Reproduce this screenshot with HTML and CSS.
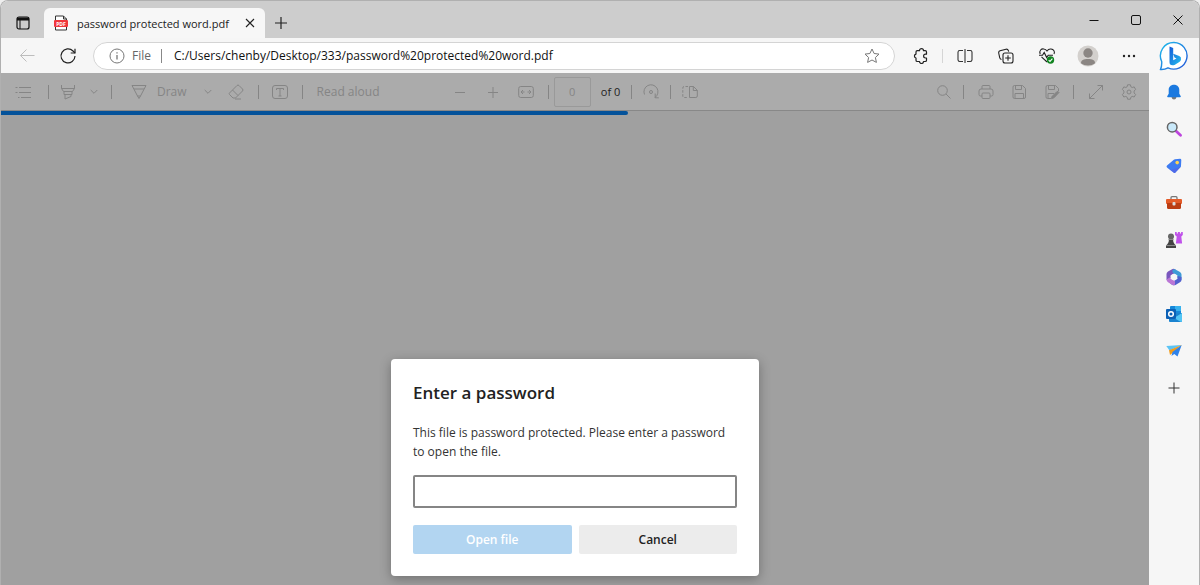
FILE: index.html
```html
<!DOCTYPE html>
<html lang="en">
<head>
    <meta charset="UTF-8">
    <meta name="viewport" content="width=device-width, initial-scale=1.0">
    <title>password protected word.pdf</title>
    <link rel="stylesheet" href="styles.css">
</head>
<body>
<div class="window">
    <!-- Tabs -->
    <header class="titlebar">
        <button class="tab-menu" aria-label="Tab actions">
            <svg width="16" height="16" viewBox="0 0 16 16" fill="none" stroke="#111"><rect x="2" y="2" width="12" height="12" rx="2" stroke-width="1.2"/><path d="M2 4h12" stroke-width="3"/><path d="M5 5v9" stroke-width="1"/></svg>
        </button>
        <div class="tab">
            <svg width="16" height="16" viewBox="0 0 16 16"><path d="M2.500 1h8l3 3v11h-11z" fill="#fff" stroke="#333"/><path d="M10.500 1v3h3" fill="none" stroke="#333"/><rect x="1" y="5" width="14" height="7" rx="1" fill="#f0383c"/><text x="8" y="10.500" class="pdf-label">PDF</text></svg>
            <span class="tab-title">password protected word.pdf</span>
            <button class="tab-close" aria-label="Close tab">
                <svg width="10" height="10" viewBox="0 0 10 10" stroke="#222" stroke-width="1.1"><path d="M1 1l8 8M9 1l-8 8"/></svg>
            </button>
        </div>
        <button class="new-tab" aria-label="New tab">
            <svg width="14" height="14" viewBox="0 0 14 14" stroke="#222" stroke-width="1.2"><path d="M7 1v12M1 7h12"/></svg>
        </button>
        <div class="window-controls">
            <button aria-label="Minimize"><svg width="10" height="10" viewBox="0 0 10 10" stroke="#111"><path d="M.5 5.500h9"/></svg></button>
            <button aria-label="Maximize"><svg width="10" height="10" viewBox="0 0 10 10" fill="none" stroke="#111"><rect x=".5" y=".5" width="9" height="9" rx="1.500"/></svg></button>
            <button aria-label="Close"><svg width="10" height="10" viewBox="0 0 10 10" stroke="#111"><path d="M.5.5l9 9M9.500.5l-9 9"/></svg></button>
        </div>
    </header>

    <div class="content">
        <main class="page">
            <!-- Address bar -->
            <nav class="navbar">
                <button class="nav-btn" aria-label="Back" disabled><svg width="16" height="16" viewBox="0 0 16 16" fill="none" stroke="#bdbdbd"><path d="M15.500 7.500H1.500M7.500 1.500l-6 6 6 6"/></svg></button>
                <button class="nav-btn" aria-label="Refresh"><svg width="18" height="18" viewBox="0 0 18 18" fill="none" stroke="#222" stroke-width="1.2"><path d="M16 9a7 7 0 1 1-2-5l2 2"/><path d="M16 1.800V6h-4.300"/></svg></button>
                <div class="address">
                    <svg width="16" height="16" viewBox="0 0 16 16" fill="none" stroke="#777"><circle cx="8" cy="8" r="7"/><path d="M8 7v4.500M8 4.300v1.300" stroke-width="1.3"/></svg>
                    <label class="address-kind" for="url">File</label>
                    <input id="url" class="address-url" type="text" value="C:/Users/chenby/Desktop/333/password%20protected%20word.pdf">
                    <button class="favorite" aria-label="Add to favorites"><svg width="16" height="16" viewBox="0 0 16 16" fill="none" stroke="#777" stroke-linejoin="round"><path d="M8 1l2.100 4.500 4.900.6-3.600 3.400 1 4.900L8 12l-4.400 2.400 1-4.900L1 6.100l4.900-.6z"/></svg></button>
                </div>
                <button class="nav-btn" aria-label="Extensions"><svg width="16" height="16" viewBox="0 0 16 16" fill="none" stroke="#222" stroke-width="1.2" stroke-linejoin="round"><path d="M4.300 2.700h2.200a2 2 0 0 1 4 0h1.700q1.300 0 1.300 1.300v2.200h-1a1.900 1.900 0 0 0 0 3.800h1v2.200q0 1.300-1.300 1.300h-1.700a2 2 0 0 1-4 0H4.300Q3 13.500 3 12.200V10a2 2 0 0 1 0-3.900V4q0-1.300 1.300-1.300z"/></svg></button>
                <span class="nav-sep"></span>
                <button class="nav-btn" aria-label="Split screen"><svg width="16" height="16" viewBox="0 0 16 16" fill="none" stroke="#333" stroke-width="1.1"><path d="M6 2.500H2.700Q1 2.500 1 4.200v7.600q0 1.700 1.700 1.700H6M10 2.500h3.300Q15 2.500 15 4.200v7.600q0 1.700-1.700 1.700H10M8 1v14"/></svg></button>
                <button class="nav-btn" aria-label="Collections"><svg width="16" height="16" viewBox="0 0 16 16" fill="none" stroke="#222" stroke-width="1.1"><path d="M3.500 11.500Q2 11.200 1.700 9.700L.7 5Q.5 3.300 2 2.800L8 1.200q1.700-.4 2.300 1.300l.4 1.200"/><rect x="5" y="5" width="10" height="10" rx="2"/><path d="M10 7.200v5.600M7.200 10h5.600"/></svg></button>
                <button class="nav-btn" aria-label="Browser essentials"><svg width="18" height="18" viewBox="0 0 18 18" fill="none" stroke="#222" stroke-width="1.1"><path d="M2.200 7C.8 3.500 3.500 1.500 5.800 2 7.200 2.200 8.300 3 9 4c1-1.500 2.400-2.200 4-2 2.700.3 4.200 2.600 3 5M3.500 9.800L9 15"/><path d="M1 8.300h3.500L6.200 5.400l2.500 5.200 1.500-2.300H15"/><circle cx="12.500" cy="13" r="3.700" fill="#118420" stroke="none"/><path d="M10.700 13.200l1.300 1.200 2.400-2.800" stroke="#fff"/></svg></button>
                <button class="nav-btn" aria-label="Profile"><svg width="22" height="22" viewBox="0 0 22 22"><circle cx="11" cy="11" r="10.500" fill="#d3d0cd"/><circle cx="11" cy="8" r="4.700" fill="#8b8683"/><path d="M4 18.200C4 15 6.500 14 11 14s7 1 7 4.200c-4 3-10 3-14 0z" fill="#8b8683"/></svg></button>
                <button class="nav-btn" aria-label="Settings and more"><svg width="14" height="4" viewBox="0 0 14 4" fill="#222"><circle cx="2" cy="2" r="1.200"/><circle cx="7" cy="2" r="1.200"/><circle cx="12" cy="2" r="1.200"/></svg></button>
            </nav>

            <!-- PDF toolbar -->
            <div class="pdf-toolbar">
                <div class="tools">
                    <button class="tool list" aria-label="Contents"><svg width="16" height="16" viewBox="0 0 16 16"><path d="M4 3.500h12M4 8.500h12M6 13.500h10M.5 3.500h2M.5 8.500h2M3 13.500h1.500"/></svg></button>
                    <span class="sep"></span>
                    <button class="tool" aria-label="Highlight"><svg width="16" height="16" viewBox="0 0 16 16"><path d="M1.500 1v3.500l2 3h9l2-3V1M1.500 4.500h13M4 7.500v3h8v-3M5 10.500V15l6-2.500v-2"/></svg></button>
                    <button class="tool small" aria-label="Highlight options"><svg width="8" height="6" viewBox="0 0 8 6"><path d="M.7 1L4 4.300 7.300 1"/></svg></button>
                    <span class="sep"></span>
                    <button class="tool draw"><svg width="16" height="16" viewBox="0 0 16 16"><path d="M1 1.500h14L9.500 12 8 14.500 6.500 12zM3 5h10M6.500 12h3"/></svg>Draw</button>
                    <button class="tool small" aria-label="Draw options"><svg width="8" height="6" viewBox="0 0 8 6"><path d="M.7 1L4 4.300 7.300 1"/></svg></button>
                    <button class="tool wide" aria-label="Erase"><svg width="16" height="16" viewBox="0 0 16 16"><path d="M1.500 9L9 1.500q1-1 2 0L14.500 5q1 1 0 2L7.500 14H5L1.500 10.500q-.8-.8 0-1.500zM4.500 6l5.500 5.500M7 15h6"/></svg></button>
                    <span class="sep"></span>
                    <button class="tool wide" aria-label="Add text"><svg width="16" height="16" viewBox="0 0 16 16"><rect x=".5" y="1.500" width="15" height="13" rx="2.500"/><path d="M4.500 6V4.500h7V6M8 4.500v7.500M6.500 12h3"/></svg></button>
                    <span class="sep"></span>
                    <button class="tool read">Read aloud</button>
                </div>
                <div class="tools">
                    <button class="tool wide" aria-label="Zoom out"><svg width="12" height="12" viewBox="0 0 12 12"><path d="M1 6.500h10"/></svg></button>
                    <button class="tool wide" aria-label="Zoom in"><svg width="12" height="12" viewBox="0 0 12 12"><path d="M1 6.500h10M6 1v11"/></svg></button>
                    <button class="tool wide" aria-label="Fit to width"><svg width="16" height="16" viewBox="0 0 16 16"><rect x=".7" y="2.500" width="14.600" height="11" rx="2"/><path d="M3 8h3.500M5 6L3 8l2 2M9.500 8H13M11 6l2 2-2 2"/></svg></button>
                    <span class="sep"></span>
                    <input class="page-number" type="text" value="0" aria-label="Page number">
                    <span class="page-count">of 0</span>
                    <span class="sep"></span>
                    <button class="tool" aria-label="Rotate"><svg width="16" height="16" viewBox="0 0 16 16"><path d="M1.500 10.500A7 7 0 1 1 12 13.500M12.200 9.500v4.300h3.600"/><circle cx="8" cy="8" r="1.500"/></svg></button>
                    <span class="sep"></span>
                    <button class="tool" aria-label="Page view"><svg width="16" height="16" viewBox="0 0 16 16"><path d="M7.500 2.500h4l3.800 3.800v5.700q0 1.500-1.500 1.500H7.500zM11.300 2.500v4h4"/><path d="M6 2.500H2.200Q.8 2.500.8 4v8q0 1.500 1.400 1.500H6" stroke-dasharray="2.500 1.500"/></svg></button>
                </div>
                <div class="tools right">
                    <button class="tool" aria-label="Find"><svg width="16" height="16" viewBox="0 0 16 16"><circle cx="6.500" cy="6.500" r="4.800"/><path d="M10 10l4.500 4.500"/></svg></button>
                    <span class="sep"></span>
                    <button class="tool wide" aria-label="Print"><svg width="16" height="16" viewBox="0 0 16 16"><path d="M4 5V2.500q0-1 1-1h6q1 0 1 1V5M4 12H2.500Q1 12 1 10.500V7q0-2 2-2h10q2 0 2 2v3.500q0 1.500-1.500 1.500H12"/><rect x="4" y="9" width="8" height="5.500" rx="1"/></svg></button>
                    <button class="tool wide" aria-label="Save"><svg width="16" height="16" viewBox="0 0 16 16"><path d="M3.500 1.500h8l3 3v8.500q0 1.500-1.500 1.500H3.500Q2 14.500 2 13V3q0-1.500 1.500-1.500zM4.500 1.500v4h6v-4M4 14.500v-5h8.500v5"/></svg></button>
                    <button class="tool wide" aria-label="Save as"><svg width="16" height="16" viewBox="0 0 16 16"><path d="M7 14.500H3.500Q2 14.500 2 13V3q0-1.500 1.500-1.500h8l3 3V7M4.500 1.500v4h6v-4M4 14.500v-5h6"/><path d="M8 12.500L13 7.500q1.200-.5 2 1L10 13.800l-2.500.8z" fill="#858585"/></svg></button>
                    <span class="sep"></span>
                    <button class="tool wide" aria-label="Full screen"><svg width="16" height="16" viewBox="0 0 16 16"><path d="M9.500 1.500h5v5M14.500 1.500l-13 13M1.500 9.500v5h5"/></svg></button>
                    <button class="tool wide" aria-label="Settings"><svg width="16" height="16" viewBox="0 0 16 16"><path d="M6.600.8h2.800l.5 2 1.300.7 2-.6 1.400 2.500L13.100 7v2l1.500 1.500-1.400 2.500-2-.6-1.300.8-.5 2H6.600l-.5-2-1.300-.8-2 .6-1.400-2.500L2.900 9V7L1.400 5.400l1.400-2.500 2 .6 1.300-.7z" stroke-linejoin="round"/><circle cx="8" cy="8" r="2"/></svg></button>
                </div>
            </div>

            <section class="viewer">
                <div class="progress"></div>
                <!-- Password dialog -->
                <form class="dialog" role="dialog" aria-labelledby="dialogTitle">
                    <h1 id="dialogTitle">Enter a password</h1>
                    <label for="password">This file is password protected. Please enter a password to open the file.</label>
                    <input id="password" class="password" type="password">
                    <div class="dialog-buttons">
                        <button class="open-btn" type="submit" disabled>Open file</button>
                        <button class="cancel-btn" type="button">Cancel</button>
                    </div>
                </form>
            </section>
        </main>

        <!-- Edge sidebar -->
        <aside class="sidebar">
            <button class="bing" aria-label="Bing chat"><svg width="30" height="30" viewBox="0 0 30 30">
                <defs>
                    <linearGradient id="bingRing" x1="0" y1="0" x2="1" y2="1"><stop offset="0" stop-color="#20bdec"/><stop offset="1" stop-color="#2355d8"/></linearGradient>
                    <linearGradient id="bingB" x1="0" y1="0" x2="1" y2="1"><stop offset="0" stop-color="#1458d8"/><stop offset="1" stop-color="#24c0ee"/></linearGradient>
                </defs>
                <path d="M15 1.500A13.300 13.300 0 1 1 9 26.800Q5.500 28.800 1.500 28.500 3 25 2.700 20.500A13.300 13.300 0 0 1 15 1.500z" fill="#fff" stroke="url(#bingRing)" stroke-width="1.400"/>
                <path d="M10.500 5.500l3.700 1.500v12.300L17.500 17.500l-2-1-1.300-3.800 6 2.300q2.300 1 1.800 3.400-.3 1.600-1.700 2.500L15.500 24q-5 1.200-5-3z" fill="url(#bingB)"/></svg></button>
            <button aria-label="Notifications"><svg width="16" height="16" viewBox="0 0 16 16"><path d="M5.500 13h5q-.5 2.500-2.500 2.500T5.500 13z" fill="#777"/><path d="M8 .7c3.200 0 5.300 2.200 5.300 5v4l1.500 2.500q.2 1-.8 1H2q-1 0-.8-1l1.500-2.500v-4c0-2.800 2.100-5 5.300-5z" fill="#1b79df"/></svg></button>
            <button aria-label="Search"><svg width="16" height="16" viewBox="0 0 16 16"><path d="M10 10l4.500 4.200" stroke="#bd45dd" stroke-width="2.800" stroke-linecap="round"/><circle cx="6.200" cy="6.200" r="4.800" fill="#c9e9fa" stroke="#666" stroke-width="1.500"/></svg></button>
            <button aria-label="Shopping"><svg width="16" height="16" viewBox="0 0 16 16"><path d="M9 1.200L14 .8q1.300 0 1.300 1.300L15 8q0 .7-.5 1.200l-5 5.400q-1 1-2 0L1 9.500q-1-1 0-2l6.800-5.800Q8.300 1.200 9 1.200z" fill="#3d7cf2"/><path d="M1 9.500l6.500 5.100q1 1 2 0L14.500 9 5 12z" fill="#6058df" opacity=".5"/><circle cx="11.200" cy="4.600" r="1.800" fill="#ffd451"/></svg></button>
            <button aria-label="Tools"><svg width="18" height="16" viewBox="0 0 18 16"><path d="M6 4V2.700q0-1 1-1h4q1 0 1 1V4" fill="none" stroke="#777" stroke-width="1.300"/><rect x="1" y="4" width="16" height="5" rx="1" fill="#e45b28"/><path d="M2 8h14v4.500q0 1.500-1.500 1.500h-11Q2 14 2 12.500z" fill="#bb3d13"/><rect x="7.500" y="7" width="3" height="3.500" rx="1" fill="#ddd"/></svg></button>
            <button aria-label="Games"><svg width="18" height="18" viewBox="0 0 18 18"><path d="M10 1h1.700v1.500h1.200V1h2v1.500h1.200V1h1.700v3l-1.500 1.500.8 7h-6.200l.8-7L10 4z" fill="#c052ea"/><circle cx="6" cy="5.500" r="3" fill="#666"/><path d="M4 8h4q0 3 1.500 5l1.500 1.500V17H1v-2.500L2.500 13Q4 11 4 8z" fill="#444"/><path d="M3.500 8.500h5M1 14.500h10" stroke="#888"/></svg></button>
            <button aria-label="Microsoft 365"><svg width="18" height="18" viewBox="0 0 18 18"><path d="M7.500 1L3 3.500Q1.500 4.500 1.500 6v6l4-2V7.500L11 4.200V2L9.500 1q-1-.5-2 0z" fill="#7956bd"/><path d="M9.500 1l5.500 3q1.500 1 1.500 2.500V12l-4-2V7.500L7.500 4.500V2z" fill="#3f9bd7"/><path d="M16.500 9v3q0 1.500-1.500 2.300L10.500 17q-1.500.7-3 0L5 15.500l7.500-4.700V8z" fill="#5361cf"/><path d="M1.500 11.500q0 1.800 1.500 2.800L7.500 17q1.500.6 2.500-.5v-3.200l-4.500-2.500V9z" fill="#ba76d5"/><circle cx="9" cy="9" r="3" fill="#f6f6f6"/></svg></button>
            <button aria-label="Outlook"><svg width="16" height="16" viewBox="0 0 16 16"><path d="M4 1q0-1 1-1h10v8H4z" fill="#1688d9"/><path d="M9 0h6v5H9z" fill="#38b2ee"/><path d="M3 7h13v8q0 1-1 1H4q-1 0-1-1z" fill="#1a83d0"/><path d="M16 7l-8 5 7 4q1 0 1-1z" fill="#52c5f4"/><rect y="3" width="10" height="10" rx="1" fill="#0c61b6"/><circle cx="5" cy="8" r="2.300" fill="none" stroke="#fff" stroke-width="1.500"/></svg></button>
            <button aria-label="Drop"><svg width="16" height="16" viewBox="0 0 16 16"><path d="M.3 3L15.700 2 3.500 7.500z" fill="#5bc4f5"/><path d="M3 7.200L15.700 2 6.500 10 4 12z" fill="#f39b18"/><path d="M15.700 2L11.500 13.500 8.300 11 5.500 13 6.500 9z" fill="#2f82ea"/></svg></button>
            <button aria-label="Customize"><svg width="14" height="14" viewBox="0 0 14 14" stroke="#333"><path d="M7 1.500v11M1.500 7h11"/></svg></button>
        </aside>
    </div>
</div>
</body>
</html>
```
FILE: styles.css
```css
* {
    box-sizing: border-box;
}

body {
    margin: 0;
    font-family: "Open Sans", "Noto Sans", sans-serif;
    font-size: 12px;
    color: #222;
    background: #eee;
}

button, input {
    font: inherit;
    color: inherit;
}

button {
    display: flex;
    align-items: center;
    justify-content: center;
    padding: 0;
    border: 0;
    background: none;
}

svg {
    display: block;
    flex: none;
}

.window {
    display: flex;
    flex-direction: column;
    height: 100vh;
    border: 1px solid #b0b0b0;
    border-bottom: 0;
    border-radius: 8px 8px 0 0;
    background: #f6f6f6;
    overflow: hidden;
}

/* title bar */
.titlebar {
    display: flex;
    align-items: flex-end;
    height: 37px;
    background: #cdcdcd;
}

.tab-menu {
    width: 43px;
    height: 30px;
}

.tab {
    display: flex;
    align-items: center;
    gap: 8px;
    width: 221px;
    height: 30px;
    padding: 0 8px 0 9px;
    border-radius: 6px 6px 0 0;
    background: #f7f7f7;
}

.tab-title {
    flex: 1;
    font-size: 11px;
    white-space: nowrap;
}

.pdf-label {
    font-size: 5px;
    font-weight: bold;
    fill: #fff;
    text-anchor: middle;
}

.tab-close {
    width: 14px;
    height: 20px;
}

.new-tab {
    width: 32px;
    height: 30px;
}

.window-controls {
    display: flex;
    align-self: stretch;
    margin-left: auto;
}

.window-controls button {
    width: 42px;
}

/* content */
.content {
    display: flex;
    flex: 1;
    min-height: 0;
}

.page {
    display: flex;
    flex: 1;
    flex-direction: column;
    min-width: 0;
}

.navbar {
    display: flex;
    align-items: center;
    height: 35px;
    padding-left: 5px;
}

.nav-btn {
    flex: none;
    width: 41px;
    height: 28px;
}

.nav-sep {
    width: 1px;
    height: 14px;
    margin: 0 1px;
    background: #d5d5d5;
}

.address {
    display: flex;
    flex: 1;
    align-items: center;
    height: 28px;
    margin: 0 5px;
    padding: 0 14px 0 15px;
    border: 1px solid #d4d4d4;
    border-radius: 14px;
    background: #fff;
}

.address-kind {
    margin-left: 7px;
    padding-right: 10px;
    border-right: 1px solid #888;
    line-height: 14px;
    color: #666;
}

.address-url {
    flex: 1;
    min-width: 0;
    padding: 0 12px;
    border: 0;
    outline: 0;
    background: none;
    color: #111;
}

/* pdf toolbar */
.pdf-toolbar {
    display: grid;
    grid-template-columns: 1fr auto 1fr;
    align-items: center;
    height: 38px;
    padding: 0 4px 0 2px;
    border-bottom: 1px solid #888;
    background: #ababab;
    color: #858585;
}

.tools {
    display: flex;
    align-items: center;
}

.tools.right {
    justify-content: flex-end;
}

.tool {
    width: 28px;
    height: 28px;
    white-space: nowrap;
}

.tool svg {
    fill: none;
    stroke: #858585;
}

.tool.list {
    width: 40px;
}

.tool.small {
    width: 24px;
}

.tool.wide {
    width: 33px;
}

.tool.draw {
    gap: 10px;
    width: auto;
    padding: 0 9px 0 14px;
}

.tool.read {
    width: auto;
    padding: 0 9px;
}

.sep {
    width: 1px;
    height: 14px;
    margin: 0 5px;
    background: #858585;
}

.page-number {
    width: 37px;
    height: 30px;
    border: 1px solid #999;
    border-radius: 2px;
    background: none;
    font-size: 11px;
    text-align: center;
}

.page-count {
    padding: 0 6px 0 10px;
    font-size: 11px;
    color: #222;
}

/* viewer */
.viewer {
    display: flex;
    flex: 1;
    flex-direction: column;
    align-items: center;
    justify-content: space-between;
    padding-bottom: 9px;
    background: #a0a0a0;
}

.progress {
    align-self: flex-start;
    width: 54.6%;
    height: 4px;
    border-radius: 0 2px 2px 0;
    background: #04529a;
}

.dialog {
    width: 368px;
    padding: 22px;
    border-radius: 4px;
    background: #fff;
    box-shadow: 0 3px 12px rgba(0, 0, 0, 0.3);
}

.dialog h1 {
    margin: 0 0 18px;
    font-size: 17px;
    font-weight: 600;
    line-height: 24px;
}

.dialog label {
    display: block;
    line-height: 19px;
    color: #333;
}

.password {
    display: block;
    width: 100%;
    height: 33px;
    margin: 14px 0 17px;
    padding: 0 8px;
    border: 2px solid #858585;
    border-radius: 2px;
    outline: 0;
}

.dialog-buttons {
    display: grid;
    grid-template-columns: 1fr 1fr;
    gap: 7px;
}

.dialog-buttons button {
    height: 29px;
    border-radius: 2px;
    font-weight: 600;
}

.open-btn {
    background: #b2d5f1;
    color: #fff;
}

.cancel-btn {
    background: #ececec;
}

/* sidebar */
.sidebar {
    display: flex;
    flex-direction: column;
    width: 50px;
    background: #f6f6f6;
}

.sidebar button {
    height: 37px;
}

.sidebar .bing {
    height: 35px;
}
```
